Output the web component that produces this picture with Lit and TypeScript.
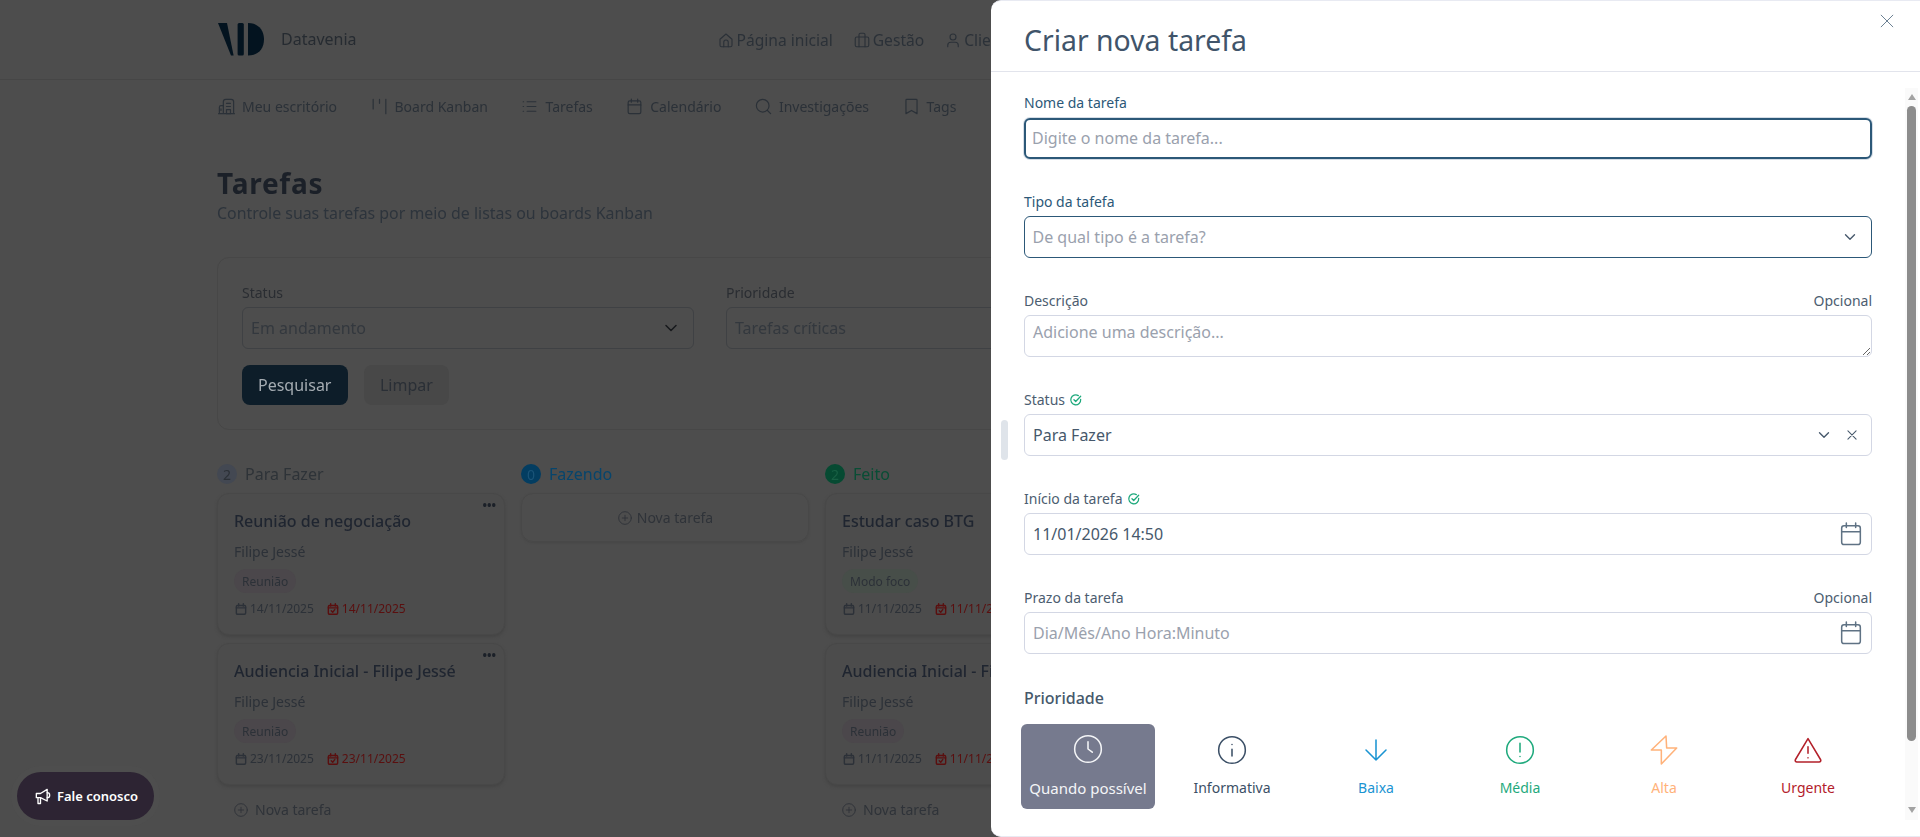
import { LitElement, html, css, svg } from "lit";
import { customElement } from "lit/decorators.js";

const ic = (size: number, cls: string, body: unknown, sw = 1.5) => html`<svg class=${cls} width=${size} height=${size} viewBox="0 0 24 24" fill="none" stroke="currentColor" stroke-width=${sw} stroke-linecap="round" stroke-linejoin="round">${body}</svg>`;

const P = {
  home: svg`<path d="M4 11l8-7 8 7v8a2 2 0 0 1-2 2H6a2 2 0 0 1-2-2z"/><path d="M9 21v-6a3 3 0 0 1 6 0v6"/>`,
  case: svg`<rect x="3" y="8" width="18" height="13" rx="2"/><path d="M8 21V5a2 2 0 0 1 2-2h4a2 2 0 0 1 2 2v16"/>`,
  user: svg`<circle cx="12" cy="8" r="4"/><path d="M5 21v-2a4 4 0 0 1 4-4h6a4 4 0 0 1 4 4v2"/>`,
  office: svg`<path d="M8 20V6a3 3 0 0 1 3-3h7a3 3 0 0 1 3 3v14"/><path d="M8 11H5a2 2 0 0 0-2 2v7"/><path d="M2 21h20"/><path d="M12 8h5M12 12h5M12 16h5v5h-5z"/><path d="M5 15v2"/>`,
  board: svg`<path d="M4 3v12M12 3v5M20 3v18"/>`,
  list: svg`<path d="M9 6h11M9 12h11M9 18h11M4 6h.5M4 12h.5M4 18h.5"/>`,
  cal: svg`<rect x="4" y="5" width="16" height="16" rx="2"/><path d="M8 2.5v4M16 2.5v4M4 10h16"/>`,
  search: svg`<circle cx="11" cy="11" r="8"/><path d="M17 17l4 4"/>`,
  tag: svg`<path d="M6 3h12a1 1 0 0 1 1 1v17l-7-4-7 4V4a1 1 0 0 1 1-1z"/>`,
  chev: svg`<path d="M6 9l6 6 6-6"/>`,
  x: svg`<path d="M5 5l14 14M19 5L5 19"/>`,
  plus: svg`<circle cx="12" cy="12" r="9.5"/><path d="M12 8v8M8 12h8"/>`,
  check: svg`<path d="M20 11a8.5 8.5 0 1 1-4-6.5"/><path d="M8.5 11.5l3 3L20 5.5"/>`,
  calFill: svg`<rect x="4" y="6" width="16" height="15" rx="2"/><path d="M8 3v4M16 3v4M4 10h16"/>`,
  calCheck: svg`<rect x="4" y="6" width="16" height="15" rx="2"/><path d="M8 3v4M16 3v4M4 10h16M9 15l2.5 2.5L15 13"/>`,
  clock: svg`<circle cx="12" cy="12" r="10"/><path d="M12 6.5V12l3.2 2.4"/>`,
  info: svg`<circle cx="12" cy="12" r="10"/><path d="M12 11.5v5M12 7.8v.1"/>`,
  down: svg`<path d="M12 4.5v15M4.5 12l7.5 7.5 7.5-7.5"/>`,
  warn: svg`<circle cx="12" cy="12" r="10"/><path d="M12 7v6.5M12 16.8v.1"/>`,
  bolt: svg`<path d="M13.5 1.5L2.5 12H10v10.5L21.5 10.5H14z"/>`,
  tri: svg`<path d="M12 3.5L2.5 19.3A1.2 1.2 0 0 0 3.6 21h16.8a1.2 1.2 0 0 0 1.1-1.7z"/><path d="M12 9.5v5M12 17.8v.1"/>`,
  mega: svg`<path d="M4 9h5l8-5v14l-8-4H4z"/><path d="M6 14v7h3v-7M17 8a3 3 0 0 1 0 6"/>`,
};

interface Task { t: string; chip: string; chipCls: string; d: string; }
interface Col { name: string; n: number; cls: string; tasks: Task[]; foot: boolean; }

const COLS: Col[] = [
  { name: "Para Fazer", n: 2, cls: "grey", foot: true, tasks: [
    { t: "Reunião de negociação", chip: "Reunião", chipCls: "pink", d: "14/11/2025" },
    { t: "Audiencia Inicial - Filipe Jessé", chip: "Reunião", chipCls: "pink", d: "23/11/2025" },
  ] },
  { name: "Fazendo", n: 0, cls: "blue", foot: false, tasks: [] },
  { name: "Feito", n: 2, cls: "green", foot: true, tasks: [
    { t: "Estudar caso BTG", chip: "Modo foco", chipCls: "mint", d: "11/11/2025" },
    { t: "Audiencia Inicial - Filipe Jessé", chip: "Reunião", chipCls: "pink", d: "11/11/2025" },
  ] },
];

const TOP = [["Página inicial", P.home], ["Gestão", P.case], ["Clientes", P.user]] as const;
const SUB = [["Meu escritório", P.office], ["Board Kanban", P.board], ["Tarefas", P.list], ["Calendário", P.cal], ["Investigações", P.search], ["Tags", P.tag]] as const;
const PRI = [
  ["Quando possível", P.clock, "active"], ["Informativa", P.info, "slate"], ["Baixa", P.down, "sky"],
  ["Média", P.warn, "emerald"], ["Alta", P.bolt, "orange"], ["Urgente", P.tri, "red"],
] as const;

@customElement("app-root")
export class AppRoot extends LitElement {
  static styles = css`
    :host { display: block; height: 100vh; overflow: hidden; position: relative; background: #4d4d4d; font-family: "Noto Sans", sans-serif; color: #262b31; font-size: 14px; }
    * { box-sizing: border-box; }
    svg { display: block; flex: none; }
    .page { filter: blur(0.45px); }
    .topbar { height: 80px; border-bottom: 1px solid #464646; }
    .wrap { width: 1486px; margin: 0 auto; }
    .topin { height: 79px; display: flex; align-items: center; }
    .logo { margin-left: 1px; }
    .brand { font-size: 16px; margin: 0 0 2px 17px; color: #262b31; }
    .topnav { display: flex; gap: 20px; margin-left: 360px; font-size: 15.6px; white-space: nowrap; color: #2b3138; }
    .topnav div { display: flex; align-items: center; gap: 2px; }
    .subnav { display: flex; height: 52px; align-items: center; gap: 32.5px; color: #2b3138; font-size: 14px; }
    .subnav div { display: flex; align-items: center; gap: 6px; }
    h1 { margin: 34px 0 0; font-size: 28px; line-height: 34px; font-weight: 700; color: #1b2028; letter-spacing: .75px; }
    .lead { font-size: 15.9px; line-height: 24px; color: #2d343c; margin-top: 1px; }
    .filter { margin-top: 32px; height: 173px; border: 1px solid #474747; border-radius: 12px; padding: 24px; }
    .fgrid { display: grid; grid-template-columns: repeat(3, 452px); gap: 32px; }
    .flabel { font-size: 14px; line-height: 21px; margin-bottom: 4px; color: #2a2d32; }
    .fsel { height: 42px; border: 1px solid #3f4144; border-radius: 6px; display: flex; align-items: center; justify-content: space-between; padding: 0 12px 0 8px; font-size: 16px; color: #33383e; }
    .fsel svg { color: #17191c; }
    .btns { display: flex; gap: 16px; margin-top: 16px; }
    .btn { height: 40px; border-radius: 8px; display: flex; align-items: center; padding: 0 16px; font-size: 16px; }
    .btn.pri { background: #0d1d29; color: #a5acb2; padding: 0 17px 0 16px; margin-right: -0.5px; }
    .btn.sec { background: #484848; color: #2a2f36; }
    .cols { display: flex; gap: 16px; margin-top: 34px; }
    .col { width: 288px; flex: none; }
    .chead { display: flex; align-items: center; gap: 8px; height: 20px; font-size: 16px; margin-bottom: 9px; }
    .badge { width: 20px; height: 20px; border-radius: 50%; display: flex; align-items: center; justify-content: center; font-size: 14px; }
    .grey .badge { background: #434852; color: #2b3036; }
    .grey { color: #2e3338; }
    .blue .badge { background: #033d61; color: #1a5478; }
    .blue { color: #07456c; }
    .green .badge { background: #064a32; color: #186044; }
    .green { color: #094d35; }
    .card { position: relative; height: 142px; margin-bottom: 8px; border: 1px solid #484848; border-radius: 12px; padding: 15px 15px 15px 16px; box-shadow: 0 2px 3px #454545; background: #4c4c4c; }
    .more { position: absolute; right: 8px; top: 4px; font-size: 12px; font-weight: 700; line-height: 16px; color: #1b2028; }
    .ctitle { font-size: 16px; line-height: 24px; font-weight: 500; color: #1f2530; white-space: nowrap; }
    .who { font-size: 14px; line-height: 21px; margin-top: 8px; color: #2c3138; }
    .chip { display: inline-flex; align-items: center; height: 24px; padding: 0 8px; border-radius: 12px; font-size: 12px; margin-top: 7px; color: #2c3138; }
    .pink { background: #4b474b; }
    .mint { background: #474e49; }
    .dates { display: flex; align-items: center; gap: 12px; font-size: 12px; line-height: 16px; margin-top: 8px; color: #2c3138; white-space: nowrap; }
    .dates span { display: flex; align-items: center; gap: 2px; }
    .late { color: #5a0f0f; }
    .empty { height: 49px; border: 1px solid #484848; border-radius: 12px; display: flex; justify-content: center; align-items: center; gap: 4px; color: #2f3339; box-shadow: 0 1px 2px #474747; }
    .foot { display: flex; align-items: center; gap: 6px; margin: 15px 0 0 16px; color: #2f3339; }

    .talk { position: absolute; left: 17px; top: 772px; width: 137px; height: 48px; border-radius: 24px; background: #2d2433; color: #fff; display: flex; align-items: center; justify-content: center; gap: 4px; font-size: 13px; font-weight: 600; box-shadow: 0 0 0 6px rgba(80,80,80,.5); }

    .drawer { position: absolute; left: 991px; top: 0; bottom: 0; width: 929px; background: #fff; border-radius: 10px 0 0 10px; border-top: 1px solid #e8eaf2; border-bottom: 1px solid #e8eaf2; display: flex; flex-direction: column; color: #3a4f66; }
    .dhead { height: 71px; flex: none; border-bottom: 1px solid #e2e4ec; display: flex; align-items: center; padding: 7px 0 0 33px; font-size: 28.4px; color: #40546a; }
    .close { position: absolute; right: 23px; top: 10px; color: #6c8193; }
    .handle { position: absolute; left: 10px; top: 419px; width: 7px; height: 40px; border-radius: 4px; background: #dfe4ea; }
    .body { display: flex; margin-top: 16px; height: 732px; flex: none; }
    .content { flex: 1; min-width: 0; overflow: hidden; padding: 4px 33px 0 33px; }
    .bar { width: 13px; margin-right: 2px; background: #fafafa; display: flex; flex-direction: column; align-items: center; }
    .arrow { width: 0; height: 0; border-left: 4px solid transparent; border-right: 4px solid transparent; flex: none; }
    .arrow.up { border-bottom: 6px solid #a3a3a3; margin-top: 6px; }
    .arrow.dn { border-top: 6px solid #a3a3a3; margin-top: 66px; }
    .thumb { width: 9px; height: 635px; margin-top: 6px; border-radius: 5px; background: #8c8c8c; flex: none; }
    .field { margin-bottom: 31px; }
    .lab { display: flex; justify-content: space-between; align-items: center; height: 21px; line-height: 19px; padding-top: 2px; margin-bottom: 5px; font-size: 14px; color: #4c5d70; }
    .lab.focus { color: #2c5878; }
    .lab.first { padding-top: 0; line-height: 21px; }
    .lab b { display: flex; align-items: center; gap: 4px; font-weight: 400; }
    .ok { color: #1ea97c; }
    .box { height: 42px; border: 1px solid #d3d7e4; border-radius: 6px; display: flex; align-items: center; padding: 0 8px; font-size: 16px; color: #46586b; font-family: inherit; width: 100%; background: #fff; }
    .box.tipo { border-color: #2c5878; padding: 0 12px 0 7.5px; }
    .box.status { padding-right: 12px; }
    .box.date { padding-right: 6px; }
    .box .txt { flex: 1; }
    .ph { color: #9aa1ad; }
    input.box, textarea.box { outline: none; display: block; }
    input.box::placeholder, textarea.box::placeholder { color: #9aa1ad; opacity: 1; }
    input.name { border: 2px solid #2c5878; padding: 0 6px 2px; box-shadow: 0 0 0 1px #d5dde6; height: 41px; }
    textarea.box { resize: vertical; padding: 4px 8px 0; line-height: 24px; }
    .ic { color: #5f7284; }
    .sel-ic { display: flex; align-items: center; gap: 12px; color: #46586b; }
    .tipo svg { color: #46586b; }
    .ptitle { font-size: 16px; font-weight: 500; line-height: 24px; color: #46586b; padding-top: 1px; height: 25px; }
    .pgrid { display: grid; grid-template-columns: repeat(6, 144px); margin: 14px -8px 0; }
    .popt { height: 85px; margin: 0 5px; border-radius: 6px; display: flex; flex-direction: column; align-items: center; padding-top: 10px; font-size: 14px; }
    .popt .plab { margin-top: 11px; line-height: 21px; white-space: nowrap; }
    .popt.active { background: #767a8e; color: #f4f5f7; padding-top: 9px; }
    .popt.active .plab { margin-top: 13px; font-size: 15px; }
    .slate { color: #3b4f66; }
    .sky { color: #1b94d2; }
    .emerald { color: #1ea97c; }
    .orange { color: #ffb27a; }
    .red { color: #b3202a; }
  `;

  private card(t: Task) {
    return html`<div class="card">
      <div class="more">•••</div>
      <div class="ctitle">${t.t}</div>
      <div class="who">Filipe Jessé</div>
      <div class="chip ${t.chipCls}">${t.chip}</div>
      <div class="dates">
        <span>${ic(14, "", P.calFill, 2.4)}${t.d}</span>
        <span class="late">${ic(14, "", P.calCheck, 2.4)}${t.d}</span>
      </div>
    </div>`;
  }

  render() {
    return html`
      <div class="page">
        <div class="topbar"><div class="wrap topin">
          <svg class="logo" width="46" height="33" viewBox="0 0 46 33" fill="#03131f"><path d="M0 0h9l6.6 32.5H13z"/><rect x="19.6" y="0" width="6.2" height="32.5" rx="1.5"/><path d="M30 0C41 0 46 8 46 16.2 46 25 41 32.5 30 32.5z"/></svg>
          <span class="brand">Datavenia</span>
          <div class="topnav">${TOP.map(([l, p]) => html`<div>${ic(18, "", p)}${l}</div>`)}</div>
        </div></div>
        <div class="wrap">
          <div class="subnav">${SUB.map(([l, p]) => html`<div>${ic(19, "", p)}${l}</div>`)}</div>
          <h1>Tarefas</h1>
          <div class="lead">Controle suas tarefas por meio de listas ou boards Kanban</div>
          <div class="filter">
            <div class="fgrid">
              <div><div class="flabel">Status</div><div class="fsel">Em andamento ${ic(20, "", P.chev, 1.8)}</div></div>
              <div><div class="flabel">Prioridade</div><div class="fsel">Tarefas críticas ${ic(20, "", P.chev, 1.8)}</div></div>
            </div>
            <div class="btns"><div class="btn pri">Pesquisar</div><div class="btn sec">Limpar</div></div>
          </div>
          <div class="cols">
            ${COLS.map(c => html`<div class="col">
              <div class="chead ${c.cls}"><span class="badge">${c.n}</span>${c.name}</div>
              ${c.tasks.length
                ? c.tasks.map(t => this.card(t))
                : html`<div class="empty">${ic(16, "", P.plus, 1.4)}Nova tarefa</div>`}
              ${c.foot ? html`<div class="foot">${ic(16, "", P.plus, 1.4)}Nova tarefa</div>` : ""}
            </div>`)}
          </div>
        </div>
      </div>

      <div class="talk">${ic(20, "", P.mega, 1.6)}Fale conosco</div>

      <aside class="drawer">
        <div class="dhead">Criar nova tarefa</div>
        ${ic(20, "close", P.x, 1.2)}
        <div class="handle"></div>
        <div class="body">
          <div class="content">
            <div class="field">
              <div class="lab focus first"><span>Nome da tarefa</span></div>
              <input class="box name" placeholder="Digite o nome da tarefa..." />
            </div>
            <div class="field">
              <div class="lab focus"><span>Tipo da tafefa</span></div>
              <div class="box tipo"><span class="txt ph">De qual tipo é a tarefa?</span>${ic(18, "", P.chev, 1.8)}</div>
            </div>
            <div class="field">
              <div class="lab"><span>Descrição</span><span>Opcional</span></div>
              <textarea class="box" placeholder="Adicione uma descrição..."></textarea>
            </div>
            <div class="field">
              <div class="lab"><b>Status ${ic(14, "ok", P.check, 2.2)}</b></div>
              <div class="box status"><span class="txt">Para Fazer</span><span class="sel-ic">${ic(18, "", P.chev, 1.8)}${ic(14, "", P.x, 1.8)}</span></div>
            </div>
            <div class="field">
              <div class="lab"><b>Início da tarefa ${ic(14, "ok", P.check, 2.2)}</b></div>
              <div class="box date"><span class="txt">11/01/2026 14:50</span>${ic(28, "ic", P.cal, 1.3)}</div>
            </div>
            <div class="field">
              <div class="lab"><span>Prazo da tarefa</span><span>Opcional</span></div>
              <div class="box date"><span class="txt ph">Dia/Mês/Ano Hora:Minuto</span>${ic(28, "ic", P.cal, 1.3)}</div>
            </div>
            <div class="ptitle">Prioridade</div>
            <div class="pgrid">
              ${PRI.map(([l, p, c]) => html`<div class="popt ${c}">${ic(32, "", p, 1.15)}<span class="plab">${l}</span></div>`)}
            </div>
          </div>
          <div class="bar"><span class="arrow up"></span><span class="thumb"></span><span class="arrow dn"></span></div>
        </div>
      </aside>
    `;
  }
}
